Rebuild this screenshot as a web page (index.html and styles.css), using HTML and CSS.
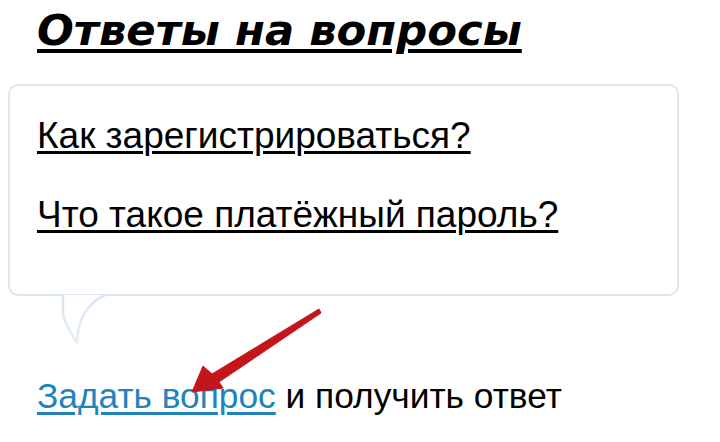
FILE: index.html
```html
<!DOCTYPE html>
<html lang="ru">
<head>
<meta charset="utf-8">
<title>Ответы на вопросы</title>
<link rel="stylesheet" href="styles.css">
</head>
<body>
<div class="page">
  <h1 class="title">Ответы на вопросы</h1>
  <div class="bubble">
    <ul class="faq">
      <li><a class="faq-link" href="#">Как зарегистрироваться?</a></li>
      <li><a class="faq-link" href="#">Что такое платёжный пароль?</a></li>
    </ul>
    <svg class="tail" width="50" height="52" viewBox="0 0 50 52">
      <defs>
        <linearGradient id="tailfade" x1="0" y1="0" x2="0" y2="1">
          <stop offset="0" stop-color="#d9e4f3"/>
          <stop offset="1" stop-color="#e6edf7"/>
        </linearGradient>
      </defs>
      <path d="M2 1 L2 20 C4 30 10 40 16 49 C16 30 24 10 44 1" fill="#fff" stroke="url(#tailfade)" stroke-width="2.5" stroke-linejoin="round" stroke-linecap="round"/>
    </svg>
  </div>
  <p class="ask"><a class="ask-link" href="#">Задать вопрос</a> и получить ответ</p>
  <svg class="arrow" width="150" height="100" viewBox="0 0 150 100">
    <path d="M12 92 L23 66 L32 74 L139 9 L141 13 L39 82 L43 88 Z" fill="#c3161c" stroke="#c3161c" stroke-width="1" stroke-linejoin="round"/>
  </svg>
</div>
</body>
</html>
```

FILE: styles.css
```css
html, body {
  margin: 0;
  padding: 0;
  background: #fff;
}
.page {
  position: relative;
  width: 720px;
  height: 442px;
  overflow: hidden;
  font-family: "Liberation Sans", Arial, sans-serif;
  color: #000;
}
.title {
  margin: 0;
  padding: 4px 0 0 37px;
  font-family: "DejaVu Sans", Verdana, sans-serif;
  font-weight: bold;
  font-style: italic;
  font-size: 43.3px;
  line-height: 52px;
  text-decoration: underline;
  text-decoration-thickness: 4px;
  text-underline-offset: 4px;
  color: #000;
}
.bubble {
  position: relative;
  margin: 28px 0 0 8px;
  width: 667px;
  height: 208px;
  border: 2px solid #dbe6f4;
  border-radius: 10px;
  background: #fff;
}
.faq {
  list-style: none;
  margin: 0;
  padding: 30px 0 0 27px;
  display: flex;
  flex-direction: column;
  gap: 39px;
}
.faq li {
  font-size: 37px;
  line-height: 40px;
}
.faq-link {
  color: #000;
  text-decoration: underline;
  text-decoration-thickness: 3px;
  text-underline-offset: 3px;
}
.tail {
  position: absolute;
  left: 51px;
  top: 208px;
}
.ask {
  margin: 80px 0 0 37px;
  font-size: 35.3px;
  line-height: 40px;
}
.ask-link {
  color: #2183bd;
  text-decoration: underline;
  text-decoration-thickness: 3px;
  text-underline-offset: 4px;
}
.arrow {
  position: absolute;
  left: 180px;
  top: 300px;
}
```
